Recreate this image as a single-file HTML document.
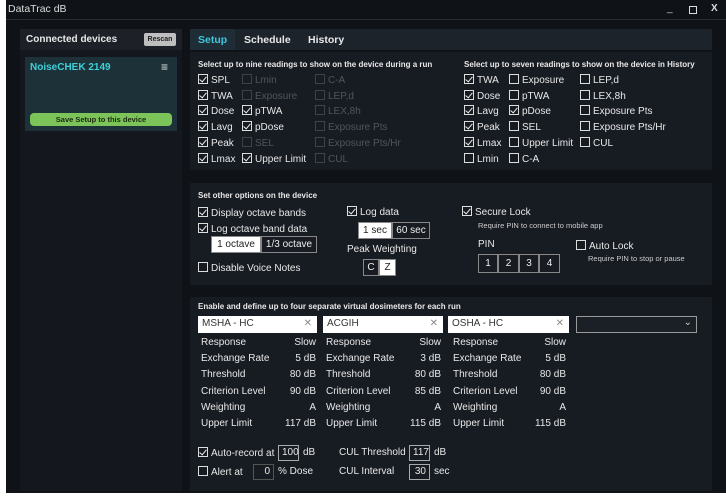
<!DOCTYPE html>
<html><head><meta charset="utf-8"><style>
*{margin:0;padding:0;box-sizing:border-box}
body{width:726px;height:499px;background:#fff;font-family:"Liberation Sans",sans-serif;font-size:10px;color:#e8e8e8;position:relative;overflow:hidden}
#win{position:absolute;left:6px;top:0;width:720px;height:493px;background:#0f1216}
.a{position:absolute;white-space:nowrap}
.cb{display:inline-block;width:10px;height:10px;border:1px solid #ddd;vertical-align:-1px;margin-right:3px;position:relative}
.cb.c::after{content:"";position:absolute;left:2px;top:0px;width:3px;height:6px;border:solid #eee;border-width:0 1.5px 1.5px 0;transform:rotate(40deg)}
.dis{color:#50555b}.dis .cb{border-color:#3e4247}
.panel{position:absolute;background:#171b22}
.btn{position:absolute;border:1px solid #888;display:flex;align-items:center;justify-content:center}
.w{background:#fff;color:#222}
.k{background:#181c22;color:#eee}
.h{font-size:8px;font-weight:bold}
.sm{font-size:7.5px;color:#ccc}
.inp{position:absolute;background:#fff;color:#333;height:17px;padding:2px 4px}
.inp span{position:absolute;right:5px;color:#888}
.r{position:absolute;text-align:right}
.box{position:absolute;border:1px solid #aaa;height:16px;text-align:right;padding:1px 3px}
</style></head><body>
<div id="win">
<div class="a" style="left:2px;top:3px;font-size:10.5px;color:#ddd">DataTrac dB</div>
<div class="a" style="left:661px;top:3px;color:#ccc">_</div>
<div class="a" style="left:683px;top:6px;width:8px;height:8px;border:1.5px solid #ddd"></div>
<div class="a" style="left:705px;top:3px;font-weight:bold;color:#ddd">X</div>
<div class="a" style="left:0;top:19px;width:720px;height:1px;background:#2a2e33"></div>
<div class="panel" style="left:14px;top:29px;width:162px;height:462px;background:#14171d"></div>
<div class="panel" style="left:14px;top:29px;width:162px;height:21px;background:#1d2127"></div>
<div class="a" style="left:20px;top:34px;font-weight:bold;font-size:10px">Connected devices</div>
<div class="a" style="left:138px;top:33px;width:32px;height:13px;background:#bfbfbf;color:#222;font-size:7px;font-weight:bold;text-align:center;line-height:13px;border-radius:2px">Rescan</div>
<div class="panel" style="left:19px;top:57px;width:152px;height:74px;background:#1c3238"></div>
<div class="a" style="left:24px;top:62px;color:#3fd0d8;font-weight:bold;font-size:10px">NoiseCHEK 2149</div>
<div class="a" style="left:155px;top:60px;font-size:12px">≡</div>
<div class="a" style="left:24px;top:113px;width:142px;height:13px;background:#7cc35a;color:#1a2a10;font-size:7.5px;font-weight:bold;text-align:center;line-height:13px;border-radius:4px">Save Setup to this device</div>
<div class="panel" style="left:184px;top:29px;width:522px;height:21px;background:#1c232b"></div>
<div class="panel" style="left:184px;top:29px;width:45px;height:21px;background:#1f2d36"></div>
<div class="a" style="left:192px;top:34px;color:#3fc8e0;font-weight:bold;font-size:10.5px">Setup</div>
<div class="a" style="left:238px;top:34px;font-weight:bold;font-size:10.5px">Schedule</div>
<div class="a" style="left:302px;top:34px;font-weight:bold;font-size:10.5px">History</div>
<div class="panel" style="left:184px;top:52px;width:522px;height:118px"></div>
<div class="a h" style="left:192px;top:60px">Select up to nine readings to show on the device during a run</div>
<div class="a h" style="left:458px;top:60px">Select up to seven readings to show on the device in History</div>
<div class="a" style="left:192px;top:73px;line-height:15.7px">
<div><span class="cb c"></span>SPL</div><div><span class="cb c"></span>TWA</div><div><span class="cb c"></span>Dose</div><div><span class="cb c"></span>Lavg</div><div><span class="cb c"></span>Peak</div><div><span class="cb c"></span>Lmax</div></div>
<div class="a" style="left:236px;top:73px;line-height:15.7px">
<div class="dis"><span class="cb"></span>Lmin</div><div class="dis"><span class="cb"></span>Exposure</div><div><span class="cb c"></span>pTWA</div><div><span class="cb c"></span>pDose</div><div class="dis"><span class="cb"></span>SEL</div><div><span class="cb c"></span>Upper Limit</div></div>
<div class="a dis" style="left:309px;top:73px;line-height:15.7px">
<div><span class="cb"></span>C-A</div><div><span class="cb"></span>LEP,d</div><div><span class="cb"></span>LEX,8h</div><div><span class="cb"></span>Exposure Pts</div><div><span class="cb"></span>Exposure Pts/Hr</div><div><span class="cb"></span>CUL</div></div>
<div class="a" style="left:458px;top:73px;line-height:15.7px">
<div><span class="cb c"></span>TWA</div><div><span class="cb c"></span>Dose</div><div><span class="cb c"></span>Lavg</div><div><span class="cb c"></span>Peak</div><div><span class="cb c"></span>Lmax</div><div><span class="cb"></span>Lmin</div></div>
<div class="a" style="left:503px;top:73px;line-height:15.7px">
<div><span class="cb"></span>Exposure</div><div><span class="cb"></span>pTWA</div><div><span class="cb c"></span>pDose</div><div><span class="cb"></span>SEL</div><div><span class="cb"></span>Upper Limit</div><div><span class="cb"></span>C-A</div></div>
<div class="a" style="left:574px;top:73px;line-height:15.7px">
<div><span class="cb"></span>LEP,d</div><div><span class="cb"></span>LEX,8h</div><div><span class="cb"></span>Exposure Pts</div><div><span class="cb"></span>Exposure Pts/Hr</div><div><span class="cb"></span>CUL</div></div>
<div class="panel" style="left:184px;top:183px;width:522px;height:102px"></div>
<div class="a h" style="left:192px;top:191px">Set other options on the device</div>
<div class="a" style="left:192px;top:206px;line-height:16px"><div><span class="cb c"></span>Display octave bands</div><div><span class="cb c"></span>Log octave band data</div></div>
<div class="btn w" style="left:205px;top:236px;width:50px;height:17px">1 octave</div>
<div class="btn k" style="left:255px;top:236px;width:56px;height:17px">1/3 octave</div>
<div class="a" style="left:192px;top:262px"><span class="cb"></span>Disable Voice Notes</div>
<div class="a" style="left:341px;top:206px"><span class="cb c"></span>Log data</div>
<div class="btn w" style="left:352px;top:222px;width:34px;height:17px">1 sec</div>
<div class="btn k" style="left:386px;top:222px;width:38px;height:17px">60 sec</div>
<div class="a" style="left:341px;top:244px">Peak Weighting</div>
<div class="btn k" style="left:357px;top:259px;width:16px;height:17px">C</div>
<div class="btn w" style="left:373px;top:259px;width:17px;height:17px">Z</div>
<div class="a" style="left:456px;top:206px"><span class="cb c"></span>Secure Lock</div>
<div class="a sm" style="left:472px;top:221px">Require PIN to connect to mobile app</div>
<div class="a" style="left:472px;top:239px">PIN</div>
<div class="btn k" style="left:472px;top:254px;width:20px;height:19px">1</div>
<div class="btn k" style="left:492px;top:254px;width:21px;height:19px">2</div>
<div class="btn k" style="left:513px;top:254px;width:20px;height:19px">3</div>
<div class="btn k" style="left:533px;top:254px;width:21px;height:19px">4</div>
<div class="a" style="left:570px;top:240px"><span class="cb"></span>Auto Lock</div>
<div class="a sm" style="left:582px;top:254px">Require PIN to stop or pause</div>
<div class="panel" style="left:184px;top:297px;width:522px;height:194px"></div>
<div class="a h" style="left:192px;top:302px">Enable and define up to four separate virtual dosimeters for each run</div>
<div class="inp" style="left:192px;top:316px;width:119px">MSHA - HC<span>✕</span></div>
<div class="inp" style="left:317px;top:316px;width:120px">ACGIH<span>✕</span></div>
<div class="inp" style="left:442px;top:316px;width:121px">OSHA - HC<span>✕</span></div>
<div class="a" style="left:570px;top:316px;width:121px;height:17px;border:1px solid #999;background:#1b1f26"><span style="position:absolute;right:4px;top:0px;color:#ccc">⌄</span></div>
<div class="a" style="left:195px;top:335px;line-height:16.2px"><div>Response</div><div>Exchange Rate</div><div>Threshold</div><div>Criterion Level</div><div>Weighting</div><div>Upper Limit</div></div>
<div class="r" style="left:260px;width:50px;top:335px;line-height:16.2px"><div>Slow</div><div>5 dB</div><div>80 dB</div><div>90 dB</div><div>A</div><div>117 dB</div></div>
<div class="a" style="left:320px;top:335px;line-height:16.2px"><div>Response</div><div>Exchange Rate</div><div>Threshold</div><div>Criterion Level</div><div>Weighting</div><div>Upper Limit</div></div>
<div class="r" style="left:385px;width:50px;top:335px;line-height:16.2px"><div>Slow</div><div>3 dB</div><div>80 dB</div><div>85 dB</div><div>A</div><div>115 dB</div></div>
<div class="a" style="left:447px;top:335px;line-height:16.2px"><div>Response</div><div>Exchange Rate</div><div>Threshold</div><div>Criterion Level</div><div>Weighting</div><div>Upper Limit</div></div>
<div class="r" style="left:510px;width:50px;top:335px;line-height:16.2px"><div>Slow</div><div>5 dB</div><div>80 dB</div><div>90 dB</div><div>A</div><div>115 dB</div></div>
<div class="a" style="left:192px;top:447px"><span class="cb c"></span>Auto-record at</div>
<div class="box" style="left:272px;top:445px;width:21px">100</div>
<div class="a" style="left:297px;top:447px">dB</div>
<div class="a" style="left:192px;top:466px"><span class="cb"></span>Alert at</div>
<div class="box" style="left:247px;top:464px;width:21px;border-color:#555">0</div>
<div class="a" style="left:272px;top:466px">% Dose</div>
<div class="a" style="left:333px;top:447px">CUL Threshold</div>
<div class="box" style="left:403px;top:445px;width:21px">117</div>
<div class="a" style="left:428px;top:447px">dB</div>
<div class="a" style="left:333px;top:466px">CUL Interval</div>
<div class="box" style="left:403px;top:464px;width:21px">30</div>
<div class="a" style="left:428px;top:466px">sec</div>
</div>
</body></html>
